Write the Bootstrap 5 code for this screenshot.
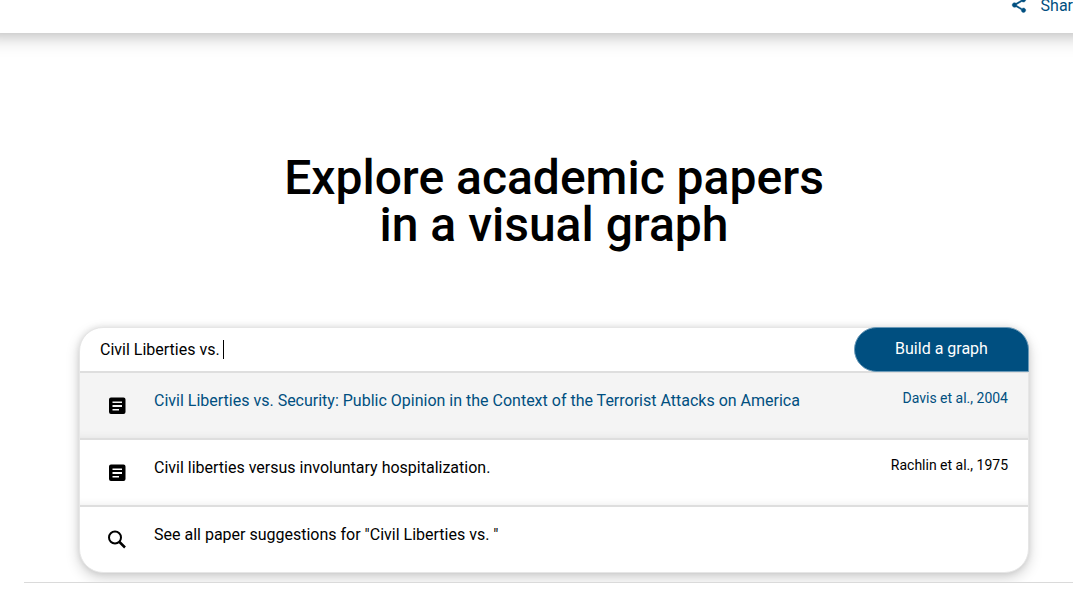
<!DOCTYPE html>
<html lang="en">
<head>
<meta charset="utf-8">
<meta name="viewport" content="width=device-width, initial-scale=1">
<title>Explore academic papers in a visual graph</title>
<link rel="stylesheet" href="https://cdn.jsdelivr.net/npm/bootstrap@5.3.0/dist/css/bootstrap.min.css">
<style>
  body { font-family: Roboto, "Liberation Sans", sans-serif; color: #000; overflow-x: hidden; }
  a { color: #004f80; }
  .topbar { height: 33px; box-shadow: 0 -20px 20px 20px rgba(0, 0, 0, .36); }
  .topbar a { gap: 13px; line-height: 12px; }
  .topbar svg { margin-top: -4px; }
  .hero { padding: 121px 44px 0 79px; }
  .hero h1 { font-size: 48px; font-weight: 500; line-height: 47px; margin-bottom: 79px; }
  .searchbox { border: 1px solid #e6e6e6; border-radius: 24px; box-shadow: 0 0 6px rgba(0, 0, 0, .1), 0 5px 14px rgba(0, 0, 0, .18); }
  .searchbox form { height: 43px; }
  .query { font-size: 16px; padding: 0 20px; background: transparent; color: #000; }
  .build { width: 175px; margin: -1px -1px -1px 0; background: #004f80; color: #fff; font-size: 16px;
    border: 1px solid #6b9ab8; border-radius: 23px 23px 0 23px; padding: 0 0 2px; }
  .build:hover { background: #004f80; color: #fff; }
  .caret { width: 1px; height: 19px; left: 143px; top: 12px; background: #000; }
  .suggestion { height: 67px; padding: 0 20px 0 25px; border-top: 2px solid #dedede; color: #000;
    box-shadow: inset 0 -8px 8px -8px rgba(0, 0, 0, .08); }
  .suggestion.chosen { background-color: #f4f4f4; color: #004f80; }
  .suggestion:last-child { box-shadow: none; }
  .suggestion svg { margin: 21px 25px 0 0; color: #000; }
  .paper { line-height: 24px; margin-top: 16px; }
  .authors { font-size: 14px; line-height: 20px; margin-top: 15px; }
  .rule { margin: 9px 0 0 24px; border-top: 1px solid #dadada; opacity: 1; }
</style>
</head>
<body class="bg-white">
<header class="topbar bg-white d-flex justify-content-end align-items-start">
  <a href="#" class="d-flex text-decoration-none text-nowrap">
    <svg width="18" height="18" viewBox="0 0 24 24" fill="currentColor" aria-hidden="true"><path d="M18 16.08c-.76 0-1.44.3-1.96.77L8.91 12.7c.05-.23.09-.46.09-.7s-.04-.47-.09-.7l7.05-4.11c.54.5 1.25.81 2.04.81 1.66 0 3-1.34 3-3s-1.34-3-3-3-3 1.34-3 3c0 .24.04.47.09.7L8.04 9.81C7.5 9.31 6.79 9 6 9c-1.66 0-3 1.34-3 3s1.34 3 3 3c.79 0 1.5-.31 2.04-.81l7.12 4.16c-.05.21-.08.43-.08.65 0 1.61 1.31 2.92 2.92 2.92s2.92-1.31 2.92-2.92-1.31-2.92-2.92-2.92z" stroke="currentColor" stroke-width=".6"/></svg>
    <span>Shar</span>
  </a>
</header>
<main>
  <section class="hero">
    <h1 class="text-center">Explore academic papers<br>in a visual graph</h1>
    <div class="searchbox bg-white">
      <form class="position-relative d-flex" role="search">
        <input type="text" class="query flex-grow-1 border-0" aria-label="Search papers" value="Civil Liberties vs. ">
        <span class="caret position-absolute"></span>
        <button type="button" class="btn build">Build a graph</button>
      </form>
      <a href="#" class="suggestion chosen d-flex align-items-start text-decoration-none">
        <svg width="24" height="24" viewBox="0 0 24 24" fill="currentColor" aria-hidden="true"><path fill-rule="evenodd" d="M18.500 3.500H6A2 2 0 0 0 4 5.500V18a2 2 0 0 0 2 2h12.500a2 2 0 0 0 2-2V5.500a2 2 0 0 0-2-2zM14 16.500H7.500V15H14v1.500zm3-3.500H7.500v-2H17v2zm0-4H7.500V7.500H17V9z"/></svg>
        <span class="paper flex-grow-1">Civil Liberties vs. Security: Public Opinion in the Context of the Terrorist Attacks on America</span>
        <span class="authors">Davis et al., 2004</span>
      </a>
      <a href="#" class="suggestion d-flex align-items-start text-decoration-none">
        <svg width="24" height="24" viewBox="0 0 24 24" fill="currentColor" aria-hidden="true"><path fill-rule="evenodd" d="M18.500 3.500H6A2 2 0 0 0 4 5.500V18a2 2 0 0 0 2 2h12.500a2 2 0 0 0 2-2V5.500a2 2 0 0 0-2-2zM14 16.500H7.500V15H14v1.500zm3-3.500H7.500v-2H17v2zm0-4H7.500V7.500H17V9z"/></svg>
        <span class="paper flex-grow-1">Civil liberties versus involuntary hospitalization.</span>
        <span class="authors">Rachlin et al., 1975</span>
      </a>
      <a href="#" class="suggestion d-flex align-items-start text-decoration-none">
        <svg width="24" height="24" viewBox="0 0 24 24" fill="none" stroke="currentColor" stroke-width="2" aria-hidden="true"><circle cx="10" cy="9.500" r="6"/><path d="M14 13.500l6 6" stroke-width="2.500"/></svg>
        <span class="paper flex-grow-1">See all paper suggestions for "Civil Liberties vs. "</span>
      </a>
    </div>
  </section>
  <hr class="rule">
</main>
<script src="https://cdn.jsdelivr.net/npm/bootstrap@5.3.0/dist/js/bootstrap.bundle.min.js"></script>
</body>
</html>
